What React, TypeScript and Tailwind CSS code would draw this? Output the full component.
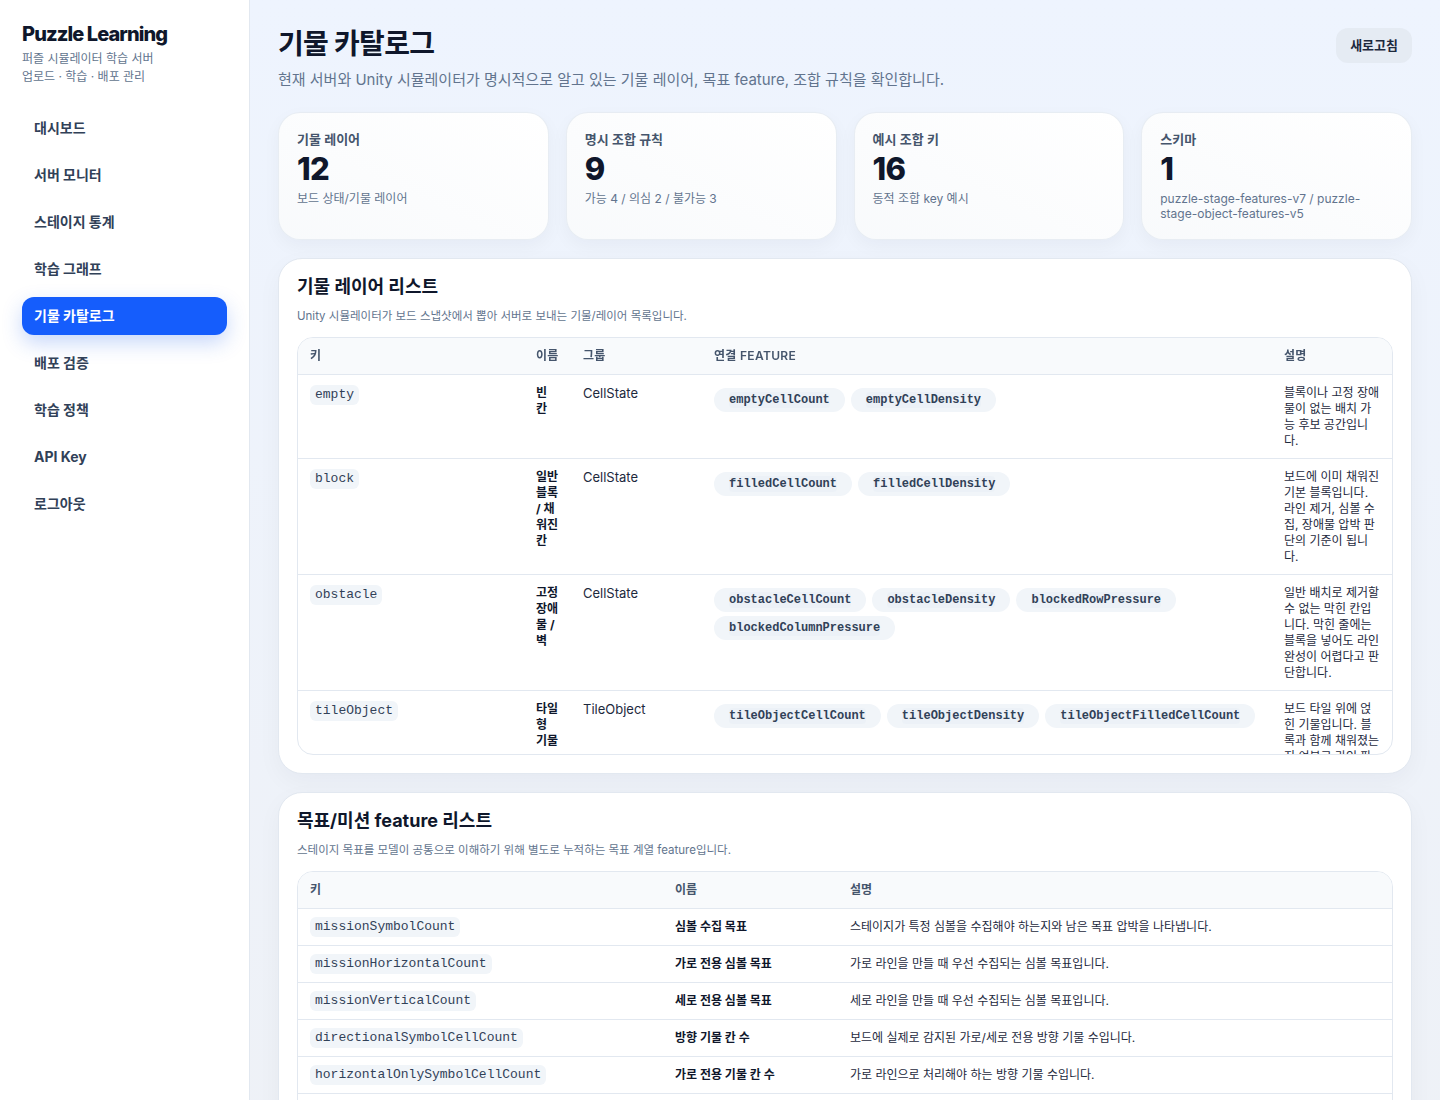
import React from 'react';

type Layer = {
  key: string,
  name: string,
  group: string,
  features: string[],
  description: string,
};

type GoalFeature = {
  key: string,
  name: string,
  description: string,
};

const NAV_ITEMS = [
  '대시보드',
  '서버 모니터',
  '스테이지 통계',
  '학습 그래프',
  '기물 카탈로그',
  '배포 검증',
  '학습 정책',
  'API Key',
  '로그아웃',
];

const STATS = [
  { label: '기물 레이어', value: '12', caption: '보드 상태/기물 레이어' },
  { label: '명시 조합 규칙', value: '9', caption: '가능 4 / 의심 2 / 불가능 3' },
  { label: '예시 조합 키', value: '16', caption: '동적 조합 key 예시' },
  { label: '스키마', value: '1', caption: 'puzzle-stage-features-v7 / puzzle-stage-object-features-v5' },
];

// 스크롤 영역 안에서 보이는 레이어만 둔다
const LAYERS: Layer[] = [
  {
    key: 'empty',
    name: '빈 칸',
    group: 'CellState',
    features: ['emptyCellCount', 'emptyCellDensity'],
    description: '블록이나 고정 장애물이 없는 배치 가능 후보 공간입니다.',
  },
  {
    key: 'block',
    name: '일반 블록 / 채워진 칸',
    group: 'CellState',
    features: ['filledCellCount', 'filledCellDensity'],
    description: '보드에 이미 채워진 기본 블록입니다. 라인 제거, 심볼 수집, 장애물 압박 판단의 기준이 됩니다.',
  },
  {
    key: 'obstacle',
    name: '고정 장애물 / 벽',
    group: 'CellState',
    features: ['obstacleCellCount', 'obstacleDensity', 'blockedRowPressure', 'blockedColumnPressure'],
    description: '일반 배치로 제거할 수 없는 막힌 칸입니다. 막힌 줄에는 블록을 넣어도 라인 완성이 어렵다고 판단합니다.',
  },
  {
    key: 'tileObject',
    name: '타일형 기물',
    group: 'TileObject',
    features: ['tileObjectCellCount', 'tileObjectDensity', 'tileObjectFilledCellCount'],
    description: '보드 타일 위에 얹힌 기물입니다. 블록과 함께 채워졌는지 여부로 라인 판정을 보조합니다.',
  },
];

const GOAL_FEATURES: GoalFeature[] = [
  { key: 'missionSymbolCount', name: '심볼 수집 목표', description: '스테이지가 특정 심볼을 수집해야 하는지와 남은 목표 압박을 나타냅니다.' },
  { key: 'missionHorizontalCount', name: '가로 전용 심볼 목표', description: '가로 라인을 만들 때 우선 수집되는 심볼 목표입니다.' },
  { key: 'missionVerticalCount', name: '세로 전용 심볼 목표', description: '세로 라인을 만들 때 우선 수집되는 심볼 목표입니다.' },
  { key: 'directionalSymbolCellCount', name: '방향 기물 칸 수', description: '보드에 실제로 감지된 가로/세로 전용 방향 기물 수입니다.' },
  { key: 'horizontalOnlySymbolCellCount', name: '가로 전용 기물 칸 수', description: '가로 라인으로 처리해야 하는 방향 기물 수입니다.' },
  { key: 'verticalOnlySymbolCellCount', name: '세로 전용 기물 칸 수', description: '세로 라인으로 처리해야 하는 방향 기물 수입니다.' },
  { key: 'missionRemainingRatio', name: '남은 목표 비율', description: '전체 목표 대비 아직 수집하지 못한 비율입니다.' },
];

function Sidebar() {
  return (
    <aside className="sticky top-0 h-screen w-[250px] shrink-0 border-r border-slate-200 bg-white px-[22px] pt-5">
      <div className="text-[20px] leading-7 font-extrabold tracking-[-0.045em] text-slate-900">Puzzle Learning</div>
      <p className="mt-0.5 text-xs leading-[18px] text-slate-500">
        퍼즐 시뮬레이터 학습 서버
        <br />
        업로드 · 학습 · 배포 관리
      </p>

      <nav className="mt-[23px] flex flex-col gap-[9px]">
        {NAV_ITEMS.map((item) => {
          const active = item === '기물 카탈로그';
          return (
            <a
              key={item}
              href="#"
              className={
                active
                  ? 'flex h-[38px] items-center rounded-xl bg-blue-600 px-3 text-sm font-bold text-white shadow-[0_8px_20px_rgba(37,99,235,0.25)]'
                  : 'flex h-[38px] items-center rounded-xl px-3 text-sm font-bold text-slate-700'
              }
            >
              {item}
            </a>
          );
        })}
      </nav>
    </aside>
  );
}

function StatCard({ label, value, caption }: { label: string, value: string, caption: string }) {
  return (
    <div className="rounded-[22px] border border-slate-200/80 bg-gradient-to-tr from-slate-50 to-white p-[18px] shadow-[0_6px_18px_rgba(15,23,42,0.04)]">
      <div className="text-[13px] leading-4 font-semibold text-slate-600">{label}</div>
      <div className="mt-1 text-[31px] leading-9 font-extrabold tracking-tight text-slate-900">{value}</div>
      <div className="mt-1 text-xs leading-[15px] text-slate-500">{caption}</div>
    </div>
  );
}

function KeyChip({ children }: { children: string }) {
  return (
    <code className="block w-fit rounded-md bg-slate-100 px-[5px] font-['Liberation_Mono',monospace] text-[13px] leading-5 text-slate-700">
      {children}
    </code>
  );
}

function FeatureChip({ children }: { children: string }) {
  return (
    <span className="inline-flex h-6 items-center rounded-full bg-slate-100 px-[15px]">
      <code className="rounded bg-[#e9eef5]/60 font-['Liberation_Mono',monospace] text-xs leading-4 font-bold text-slate-700">
        {children}
      </code>
    </span>
  );
}

function SectionCard({ title, subtitle, children }: { title: string, subtitle: string, children: React.ReactNode }) {
  return (
    <section className="rounded-[24px] border border-slate-200 bg-white p-[18px] shadow-[0_8px_24px_rgba(15,23,42,0.04)]">
      <h2 className="text-lg leading-5 font-bold text-slate-900">{title}</h2>
      <p className="mt-[11px] text-[11.5px] leading-4 text-slate-500">{subtitle}</p>
      <div className="mt-[13px]">{children}</div>
    </section>
  );
}

function LayerTable() {
  return (
    <div className="max-h-[418px] overflow-auto rounded-2xl border border-slate-200 [scrollbar-width:none]">
      <table className="w-full table-fixed border-collapse text-left">
        <colgroup>
          <col className="w-[226px]" />
          <col className="w-[47px]" />
          <col className="w-[131px]" />
          <col />
          <col className="w-[120px]" />
        </colgroup>
        <thead className="sticky top-0 bg-slate-50">
          <tr className="text-xs leading-4 font-semibold tracking-wide text-slate-600 uppercase">
            <th className="px-3 py-2.5 font-semibold">키</th>
            <th className="px-3 py-2.5 font-semibold">이름</th>
            <th className="px-3 py-2.5 font-semibold">그룹</th>
            <th className="px-3 py-2.5 font-semibold">연결 feature</th>
            <th className="px-3 py-2.5 font-semibold">설명</th>
          </tr>
        </thead>
        <tbody>
          {LAYERS.map((layer) => (
            <tr key={layer.key} className="border-t border-slate-200 align-top">
              <td className="px-3 pt-2.5 pb-[9px]">
                <KeyChip>{layer.key}</KeyChip>
              </td>
              <td className="px-3 pt-2.5 pb-[9px] text-xs leading-4 font-bold text-slate-900">{layer.name}</td>
              <td className="px-3 pt-2.5 pb-[9px] text-[13px] leading-4 text-slate-800">{layer.group}</td>
              <td className="px-3 pt-[13px] pb-[9px]">
                <div className="flex flex-wrap gap-x-1.5 gap-y-1">
                  {layer.features.map((feature) => (
                    <FeatureChip key={feature}>{feature}</FeatureChip>
                  ))}
                </div>
              </td>
              <td className="px-3 pt-2.5 pb-[9px] text-xs leading-4 text-slate-800">{layer.description}</td>
            </tr>
          ))}
        </tbody>
      </table>
    </div>
  );
}

function GoalTable() {
  return (
    <div className="overflow-hidden rounded-2xl border border-slate-200">
      <table className="w-full table-fixed border-collapse text-left">
        <colgroup>
          <col className="w-[365px]" />
          <col className="w-[175px]" />
          <col />
        </colgroup>
        <thead className="bg-slate-50">
          <tr className="text-xs leading-4 font-semibold text-slate-600">
            <th className="px-3 py-2.5 font-semibold">키</th>
            <th className="px-3 py-2.5 font-semibold">이름</th>
            <th className="px-3 py-2.5 font-semibold">설명</th>
          </tr>
        </thead>
        <tbody>
          {GOAL_FEATURES.map((item) => (
            <tr key={item.key} className="border-t border-slate-200">
              <td className="px-3 py-2">
                <KeyChip>{item.key}</KeyChip>
              </td>
              <td className="px-3 py-2 text-xs leading-4 font-bold text-slate-900">{item.name}</td>
              <td className="px-3 py-2 text-xs leading-4 text-slate-800">{item.description}</td>
            </tr>
          ))}
        </tbody>
      </table>
    </div>
  );
}

export default function App() {
  return (
    <div className="flex min-h-screen bg-gradient-to-b from-[#eef4fe] to-[#eef1f6] font-['Inter','Noto_Sans_CJK_KR',sans-serif]">
      <Sidebar />

      <main className="min-w-0 flex-1 px-7 pt-[26px] pb-10">
        <header className="flex items-start justify-between">
          <div>
            <h1 className="text-[28px] leading-9 font-bold tracking-tight text-slate-900">기물 카탈로그</h1>
            <p className="mt-1.5 text-[15px] leading-6 text-slate-500">
              현재 서버와 Unity 시뮬레이터가 명시적으로 알고 있는 기물 레이어, 목표 feature, 조합 규칙을 확인합니다.
            </p>
          </div>
          <button className="mt-0.5 h-[35px] rounded-xl bg-slate-200/80 px-3.5 text-[13px] font-bold text-slate-800">
            새로고침
          </button>
        </header>

        <div className="mt-5 grid grid-cols-4 gap-[17px]">
          {STATS.map((stat) => (
            <StatCard key={stat.label} {...stat} />
          ))}
        </div>

        <div className="mt-[18px] flex flex-col gap-[18px]">
          <SectionCard
            title="기물 레이어 리스트"
            subtitle="Unity 시뮬레이터가 보드 스냅샷에서 뽑아 서버로 보내는 기물/레이어 목록입니다."
          >
            <LayerTable />
          </SectionCard>

          <SectionCard
            title="목표/미션 feature 리스트"
            subtitle="스테이지 목표를 모델이 공통으로 이해하기 위해 별도로 누적하는 목표 계열 feature입니다."
          >
            <GoalTable />
          </SectionCard>
        </div>
      </main>
    </div>
  );
}
